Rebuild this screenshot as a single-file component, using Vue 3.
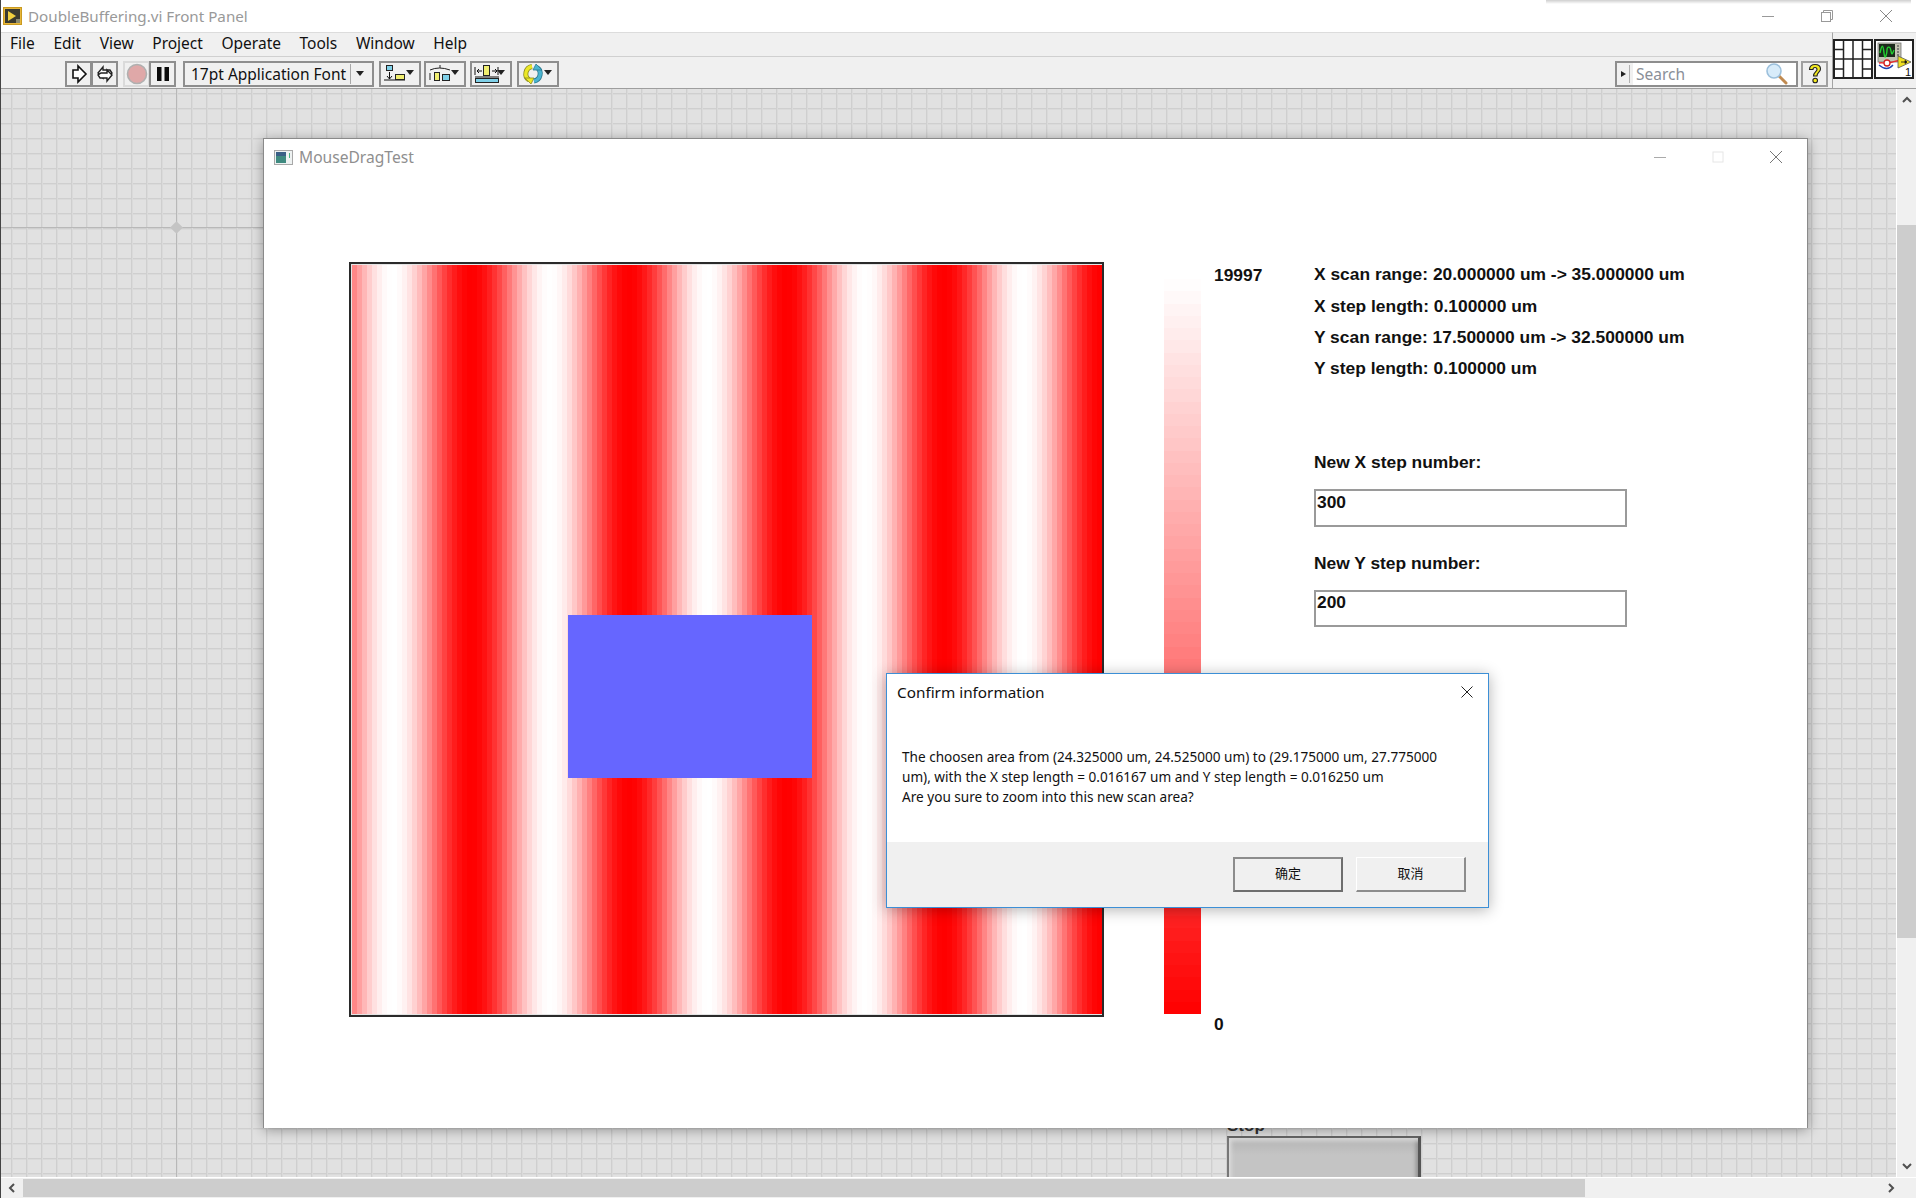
<script setup>
const menus = ["File", "Edit", "View", "Project", "Operate", "Tools", "Window", "Help"];

// 150 scan columns, 5px each on screen
const columns = Array.from({ length: 150 }, (_, i) => {
  const x = 354.5 + i * 5;
  const v = 0.5 + 0.5 * Math.cos((2 * Math.PI * (x - 392.5)) / 157.6);
  const g = Math.round(255 * v);
  return `rgb(255, ${g}, ${g})`;
});

const scale = Array.from({ length: 60 }, (_, i) => {
  const g = Math.round(255 * (1 - (i + 0.5) / 60));
  return `rgb(255, ${g}, ${g})`;
});

const infoRows = [
  "X scan range: 20.000000 um -> 35.000000 um",
  "X step length: 0.100000 um",
  "Y scan range: 17.500000 um -> 32.500000 um",
  "Y step length: 0.100000 um",
];
</script>

<template>
  <div class="app">
    <!-- LabVIEW window title -->
    <div class="titlebar">
      <svg class="vi-logo" width="19" height="18" viewBox="0 0 19 18">
        <rect x="0.5" y="0.5" width="18" height="17" fill="#e8b73a" stroke="#c99a20" />
        <rect x="2" y="2" width="15" height="14" fill="#3a3a30" />
        <path d="M5 4l8 5-8 5z" fill="#f0d040" />
        <rect x="13" y="12" width="4" height="4" fill="#8a8a70" />
      </svg>
      <span class="titlebar-text">DoubleBuffering.vi Front Panel</span>
      <div class="top-shadow"></div>
      <div class="win-buttons">
        <svg width="12" height="12" viewBox="0 0 12 12"><path d="M0 6.5h12" stroke="#999" fill="none" /></svg>
        <svg width="12" height="12" viewBox="0 0 12 12">
          <path d="M2.5 2.5v-2h9v9h-2" stroke="#999" fill="none" />
          <rect x="0.5" y="2.5" width="9" height="9" stroke="#999" fill="none" />
        </svg>
        <svg width="12" height="12" viewBox="0 0 12 12"><path d="M0 0l12 12M12 0L0 12" stroke="#888" fill="none" /></svg>
      </div>
    </div>

    <div class="chrome">
      <div class="chrome-main">
        <div class="menubar">
          <span v-for="m in menus" :key="m" class="menu-item">{{ m }}</span>
        </div>
        <div class="toolbar">
          <div class="tool-group first">
            <div class="tool-btn">
              <svg width="18" height="20" viewBox="0 0 18 20">
                <path d="M3 6h5V2l8 8-8 8v-4H3z" fill="#fff" stroke="#111" stroke-width="1.6" />
              </svg>
            </div>
            <div class="tool-btn joined">
              <svg width="20" height="20" viewBox="0 0 20 20">
                <path d="M3 9l5-6v3h7l2 3-3 2H8v3z" fill="#fff" stroke="#222" stroke-width="1.4" />
                <path d="M17 11l-5 6v-3H5l-2-3 3-2h6V6z" fill="#fff" stroke="#222" stroke-width="1.4" />
              </svg>
            </div>
          </div>
          <div class="tool-group abort-group">
            <div class="tool-btn flat">
              <svg width="22" height="22" viewBox="0 0 22 22">
                <circle cx="11" cy="11" r="9.5" fill="#dfa8a8" stroke="#b0b0b0" stroke-width="1.6" />
              </svg>
            </div>
            <div class="tool-btn joined">
              <svg width="14" height="16" viewBox="0 0 14 16">
                <rect x="1" y="1" width="4.5" height="14" fill="#0c0c0c" />
                <rect x="8.5" y="1" width="4.5" height="14" fill="#0c0c0c" />
              </svg>
            </div>
          </div>
          <div class="font-btn">
            <span class="font-name">17pt Application Font</span>
            <span class="font-sep"></span>
            <span class="caret"></span>
          </div>
          <div class="tool-btn drop align">
            <svg width="26" height="20" viewBox="0 0 26 20">
              <rect x="3.5" y="1.5" width="6" height="5" fill="#7fd0e8" stroke="#222" />
              <path d="M6.5 8v7M4 12l2.5 3L9 12" stroke="#111" fill="none" />
              <path d="M1 16h21" stroke="#111" />
              <rect x="12.5" y="10.5" width="9" height="5" fill="#f0ee70" stroke="#222" />
            </svg>
            <span class="caret"></span>
          </div>
          <div class="tool-btn drop dist">
            <svg width="26" height="20" viewBox="0 0 26 20">
              <path d="M2 6q9-4 20 0M12 1v3" stroke="#222" fill="none" />
              <rect x="6.5" y="8.5" width="5" height="8" fill="#f0ee70" stroke="#222" />
              <rect x="14.5" y="10.5" width="7" height="6" fill="#7fd0e8" stroke="#222" />
              <path d="M2 9v7" stroke="#222" />
            </svg>
            <span class="caret"></span>
          </div>
          <div class="tool-btn drop resize">
            <svg width="26" height="20" viewBox="0 0 26 20">
              <path d="M1 3v8M24 3v8M3 7h5M23 7h-5" stroke="#111" fill="none" />
              <path d="M5 5L3 7l2 2M21 5l2 2-2 2" stroke="#111" fill="none" />
              <rect x="9.5" y="1.5" width="6" height="10" fill="#f0ee70" stroke="#222" />
              <path d="M1 13h24" stroke="#111" />
              <rect x="1.5" y="14.5" width="23" height="4" fill="#7fd0e8" stroke="#222" />
            </svg>
            <span class="caret"></span>
          </div>
          <div class="tool-btn drop reorder">
            <svg width="26" height="22" viewBox="0 0 26 22">
              <path d="M11 3.500A7.500 7.500 0 0 0 8 17" stroke="#8a8a20" stroke-width="5" fill="none" />
              <path d="M11 3.500A7.500 7.500 0 0 0 8 17" stroke="#ece826" stroke-width="3.400" fill="none" />
              <path d="M4 15h9l-3 6z" fill="#ece826" stroke="#8a8a20" stroke-width="0.800" />
              <path d="M13 18A7.500 7.500 0 0 0 16 4.500" stroke="#2a7a90" stroke-width="5" fill="none" />
              <path d="M13 18A7.500 7.500 0 0 0 16 4.500" stroke="#4ab4d0" stroke-width="3.400" fill="none" />
              <path d="M21 7h-9l3-6z" fill="#4ab4d0" stroke="#2a7a90" stroke-width="0.800" />
            </svg>
            <span class="caret"></span>
          </div>
          <div class="search">
            <div class="search-side">
              <span class="search-arrow"></span>
            </div>
            <span class="search-text">Search</span>
            <svg class="search-icon" width="24" height="22" viewBox="0 0 24 22">
              <path d="M14 13l7 7" stroke="#c08a50" stroke-width="3" stroke-linecap="round" />
              <circle cx="9" cy="8" r="7" fill="#d8ecfa" stroke="#9cc0dc" stroke-width="1.6" />
            </svg>
          </div>
          <div class="help-btn">
            <svg width="16" height="22" viewBox="0 0 16 22">
              <path d="M2.5 6.5C2.5 3 5 1.5 8 1.5s5.500 1.500 5.500 4.500c0 3-3.500 3.500-3.500 7H6.500c0-4 3.500-4.500 3.500-6.500 0-1-.8-2-2-2s-2 1-2 2z" fill="#f4ea20" stroke="#222" stroke-width="1.100" />
              <circle cx="8.200" cy="17.500" r="2.300" fill="#f4ea20" stroke="#222" stroke-width="1.100" />
            </svg>
          </div>
        </div>
      </div>
      <div class="chrome-side">
        <svg width="40" height="40" viewBox="0 0 40 40">
          <rect x="1" y="1" width="38" height="38" fill="#fff" stroke="#222" stroke-width="2" />
          <path d="M10.500 1v38M20 1v38M29.500 1v38M1 20h38M1 10.500h9.500M1 30h9.500M29.500 10.500H39M29.500 30H39" stroke="#222" stroke-width="1.500" fill="none" />
        </svg>
        <svg width="40" height="40" viewBox="0 0 40 40">
          <rect x="1" y="1" width="38" height="38" fill="#fff" stroke="#222" stroke-width="2" />
          <rect x="4" y="4" width="23" height="19" fill="#c4c4b4" stroke="#777" stroke-width="0.800" />
          <rect x="5" y="5" width="16" height="13" fill="#1c2a1c" />
          <path d="M6 14c2-9 3-9 4 0s3 0 3-3 3-5 4 1 2 1 3-1" stroke="#22d030" stroke-width="1.400" fill="none" />
          <path d="M23 7h2M23 10h2M23 13h2M23 16h2" stroke="#666" stroke-width="1.500" />
          <path d="M5 24c4-1 8 1 10 0s8-2 12-3" stroke="#e83030" stroke-width="1.300" fill="none" />
          <circle cx="13" cy="24" r="3" fill="#fff" stroke="#d02020" stroke-width="1.300" />
          <path d="M5 26q8 7 14 0" stroke="#2040b0" stroke-width="1.300" fill="none" />
          <path d="M24 17l13 6-13 6z" fill="#f0e020" stroke="#555" stroke-width="0.800" />
          <path d="M27 23h4M31 21.500l2 1.500-2 1.500z" stroke="#111" fill="#111" stroke-width="0.800" />
          <text x="31" y="37" class="vi-num">1</text>
        </svg>
      </div>
    </div>

    <div class="workspace">
      <div class="canvas">
        <div class="origin-v"></div>
        <div class="origin-h"></div>
        <div class="origin-dot"></div>

        <div class="stop-ctl">
          <div class="stop-label">Stop</div>
          <div class="stop-btn"></div>
        </div>

        <!-- front panel child window -->
        <div class="panel">
          <div class="panel-title">
            <svg width="19" height="15" viewBox="0 0 19 15">
              <rect x="0.500" y="0.500" width="18" height="14" fill="#eef2f2" stroke="#a8a8a8" />
              <rect x="2" y="2" width="10" height="11" fill="#3f8a80" />
              <rect x="2" y="2" width="10" height="4" fill="#3a5f86" />
              <rect x="15" y="3" width="1" height="5" fill="#4ab080" />
            </svg>
            <span class="panel-name">MouseDragTest</span>
            <div class="panel-buttons">
              <svg width="12" height="12" viewBox="0 0 12 12"><path d="M0 6.500h12" stroke="#aaa" fill="none" /></svg>
              <svg width="12" height="12" viewBox="0 0 12 12"><rect x="1" y="1" width="10" height="10" stroke="#e6e6e6" fill="none" /></svg>
              <svg width="12" height="12" viewBox="0 0 12 12"><path d="M0 0l12 12M12 0L0 12" stroke="#777" fill="none" /></svg>
            </div>
          </div>
          <div class="panel-body">
            <div class="plot">
              <div class="plot-inner">
                <div v-for="(c, i) in columns" :key="i" class="col" :style="{ background: c }"></div>
                <div class="selection"></div>
              </div>
            </div>
            <div class="legend">
              <div class="legend-bar">
                <div v-for="(c, i) in scale" :key="i" class="legend-step" :style="{ background: c }"></div>
              </div>
              <div class="legend-labels">
                <span>19997</span>
                <span>0</span>
              </div>
            </div>
            <div class="info">
              <div v-for="r in infoRows" :key="r" class="info-row">{{ r }}</div>
              <div class="field-label first-field">New X step number:</div>
              <div class="field">300</div>
              <div class="field-label">New Y step number:</div>
              <div class="field">200</div>
            </div>
          </div>
        </div>
      </div>
      <div class="vscroll">
        <svg class="arrow" width="10" height="8" viewBox="0 0 10 8"><path d="M1 6l4-4 4 4" stroke="#505050" stroke-width="2" fill="none" /></svg>
        <div class="vthumb"></div>
        <div class="spacer"></div>
        <svg class="arrow" width="10" height="8" viewBox="0 0 10 8"><path d="M1 2l4 4 4-4" stroke="#505050" stroke-width="2" fill="none" /></svg>
      </div>
    </div>

    <div class="hscroll">
      <div class="h-arrow">
        <svg width="8" height="10" viewBox="0 0 8 10"><path d="M6 1L2 5l4 4" stroke="#505050" stroke-width="2" fill="none" /></svg>
      </div>
      <div class="hthumb"></div>
      <div class="spacer"></div>
      <div class="h-arrow right">
        <svg width="8" height="10" viewBox="0 0 8 10"><path d="M2 1l4 4-4 4" stroke="#505050" stroke-width="2" fill="none" /></svg>
      </div>
    </div>

    <!-- modal message box -->
    <div class="dialog">
      <div class="dialog-head">
        <span>Confirm information</span>
        <svg width="12" height="12" viewBox="0 0 12 12"><path d="M0.500 0.500l11 11M11.500 0.500l-11 11" stroke="#222" fill="none" /></svg>
      </div>
      <div class="dialog-msg">
        The choosen area from (24.325000 um, 24.525000 um) to (29.175000 um, 27.775000<br />
        um), with the X step length = 0.016167 um and Y step length = 0.016250 um<br />
        Are you sure to zoom into this new scan area?
      </div>
      <div class="dialog-foot">
        <div class="dlg-btn default">确定</div>
        <div class="dlg-btn">取消</div>
      </div>
    </div>
  </div>
</template>

<style scoped>
.app {
  position: relative;
  width: 1916px;
  height: 1198px;
  overflow: hidden;
  display: flex;
  flex-direction: column;
  background: #fff;
  font-family: "Noto Sans", "Liberation Sans", sans-serif;
  border-left: 1px solid #444;
  box-sizing: border-box;
}

.titlebar {
  position: relative;
  flex: none;
  height: 32px;
  display: flex;
  align-items: center;
  padding-left: 2px;
  background: #fff;
  box-sizing: border-box;
}

.titlebar-text {
  margin-left: 6px;
  font-size: 15.200px;
  color: #999;
}

.top-shadow {
  position: absolute;
  top: 0;
  left: 1545px;
  width: 365px;
  height: 4px;
  background: linear-gradient(#cfcfcf, #fff);
}

.win-buttons {
  margin-left: auto;
  width: 154px;
  display: flex;
  justify-content: space-between;
  box-sizing: border-box;
  padding-right: 24px;
  gap: 46px;
}

.chrome {
  flex: none;
  height: 57px;
  display: flex;
  background: #f0f0f0;
  border-bottom: 1px solid #9e9e9e;
  box-sizing: border-box;
}

.chrome-main {
  flex: 1;
  min-width: 0;
  display: flex;
  flex-direction: column;
}

.chrome-side {
  flex: none;
  width: 84px;
  box-sizing: border-box;
  border-left: 1px solid #a4a4a4;
  border-top: 1px solid #dcdcdc;
  display: flex;
  gap: 1px;
  padding: 6px 0 0 0;
}

.vi-num {
  font-family: "Liberation Sans", sans-serif;
  font-size: 11px;
  fill: #111;
}

.menubar {
  height: 25px;
  display: flex;
  align-items: center;
  padding: 0 0 3px 9px;
  gap: 18.600px;
  border-top: 1px solid #dcdcdc;
  border-bottom: 1px solid #d0d0d0;
  box-sizing: border-box;
  font-size: 15.500px;
  color: #111;
}

.toolbar {
  flex: 1;
  display: flex;
  align-items: center;
  padding: 2px 4px 0 64px;
}

.tool-group {
  display: flex;
}

.abort-group {
  margin-left: 5px;
}

.tool-btn {
  height: 26px;
  width: 27px;
  box-sizing: border-box;
  border: 2px solid #8e8e8e;
  display: flex;
  align-items: center;
  justify-content: center;
  flex: none;
}

.tool-btn.joined {
  margin-left: -1px;
}

.tool-btn.flat {
  border-color: #dadada;
}

.font-btn {
  margin-left: 7px;
  width: 191px;
  height: 26px;
  box-sizing: border-box;
  border: 2px solid #8e8e8e;
  display: flex;
  align-items: center;
  padding-left: 6px;
  font-size: 15.500px;
  color: #111;
}

.font-name {
  width: 159px;
  white-space: nowrap;
}

.font-sep {
  width: 1px;
  height: 20px;
  background: #a8a8a8;
  margin-right: 5px;
}

.caret {
  width: 0;
  height: 0;
  border-left: 4px solid transparent;
  border-right: 4px solid transparent;
  border-top: 5px solid #222;
}

.drop {
  width: 42px;
  gap: 0;
  justify-content: flex-start;
  padding-left: 2px;
}

.align {
  margin-left: 5px;
}

.dist {
  margin-left: 3px;
}

.resize {
  margin-left: 4px;
}

.reorder {
  margin-left: 5px;
}

.drop .caret {
  margin-left: -3px;
  margin-top: -3px;
}

.search {
  margin-left: auto;
  width: 183px;
  height: 26px;
  box-sizing: border-box;
  border: 2px solid #8e8e8e;
  background: #fff;
  display: flex;
  align-items: center;
}

.search-side {
  width: 16px;
  height: 100%;
  background: #f0f0f0;
  display: flex;
  align-items: center;
  padding-left: 4px;
  box-sizing: border-box;
  position: relative;
}

.search-side::after {
  content: "";
  position: absolute;
  right: 3px;
  top: 2px;
  bottom: 2px;
  width: 1px;
  background: #b0b0b0;
}

.search-arrow {
  width: 0;
  height: 0;
  border-top: 3px solid transparent;
  border-bottom: 3px solid transparent;
  border-left: 5px solid #222;
}

.search-text {
  margin-left: 3px;
  font-size: 15.500px;
  color: #8a8f98;
}

.search-icon {
  margin-left: auto;
  margin-right: 7px;
}

.help-btn {
  margin-left: 3px;
  width: 27px;
  height: 26px;
  box-sizing: border-box;
  border: 2px solid #a0a0a0;
  display: flex;
  align-items: center;
  justify-content: center;
}

.workspace {
  flex: 1;
  min-height: 0;
  display: flex;
}

.canvas {
  position: relative;
  flex: 1;
  min-width: 0;
  overflow: hidden;
  background-color: #e1e1e1;
  background-image:
    linear-gradient(to right, #cfcfcf 1px, #dadada 1px, #dadada 2px, transparent 2px),
    linear-gradient(to bottom, #cfcfcf 1px, #dadada 1px, #dadada 2px, transparent 2px);
  background-size: 15px 15px;
  background-position: 10px 4px;
}

.origin-v {
  position: absolute;
  left: 175px;
  top: 0;
  bottom: 0;
  width: 1px;
  background: #b8b8b8;
}

.origin-h {
  position: absolute;
  left: 0;
  top: 138px;
  width: 300px;
  height: 1px;
  background: #b8b8b8;
}

.origin-dot {
  position: absolute;
  left: 171px;
  top: 134px;
  width: 9px;
  height: 9px;
  background: #c4c4c4;
  transform: rotate(45deg);
}

.stop-ctl {
  position: absolute;
  left: 1226px;
  top: 1027px;
  width: 194px;
}

.stop-label {
  height: 20px;
  font-family: "Liberation Sans", sans-serif;
  font-size: 17px;
  font-weight: 700;
  line-height: 20px;
  color: #333;
}

.stop-btn {
  height: 70px;
  box-sizing: border-box;
  border-top: 2px solid #666;
  border-left: 2px solid #777;
  border-right: 3px solid #555;
  background: linear-gradient(#b4b4b4, #c4c4c4 25%, #c4c4c4 80%, #aeaeae);
  box-shadow: inset 5px 6px 4px -3px #dedede, inset -5px 0 4px -3px #8c8c8c;
}

.panel {
  position: absolute;
  left: 262px;
  top: 49px;
  width: 1545px;
  height: 990px;
  box-sizing: border-box;
  background: #fff;
  border: 1px solid #8a8a8a;
  border-bottom: none;
  box-shadow: 0 2px 12px rgba(0, 0, 0, 0.35);
  display: flex;
  flex-direction: column;
}

.panel-title {
  flex: none;
  height: 36px;
  display: flex;
  align-items: center;
  padding-left: 10px;
}

.panel-name {
  margin-left: 6px;
  font-size: 15.600px;
  color: #8f8f8f;
}

.panel-buttons {
  margin-left: auto;
  display: flex;
  gap: 46px;
  padding-right: 25px;
}

.panel-body {
  flex: 1;
  display: flex;
  align-items: flex-start;
  padding: 83px 0 0 85px;
  font-family: "Liberation Sans", sans-serif;
  font-size: 17.400px;
  font-weight: 700;
  color: #111;
}

.plot {
  flex: none;
  margin-top: 4px;
  width: 755px;
  height: 755px;
  box-sizing: border-box;
  border: 2px solid #2a2a2a;
  padding: 1px;
  background: #e4e4e4;
}

.plot-inner {
  position: relative;
  width: 100%;
  height: 100%;
  display: flex;
}

.col {
  flex: 1;
}

.selection {
  position: absolute;
  left: 216px;
  top: 350px;
  width: 244px;
  height: 163px;
  background: #6666ff;
}

.legend {
  flex: none;
  margin-left: 60px;
  margin-top: 8px;
  height: 767px;
  width: 150px;
  display: flex;
}

.legend-bar {
  flex: none;
  width: 37px;
  height: 735px;
  margin-top: 13px;
  display: flex;
  flex-direction: column;
}

.legend-step {
  flex: 1;
}

.legend-labels {
  margin-left: 13px;
  display: flex;
  flex-direction: column;
  justify-content: space-between;
  line-height: 18px;
}

.info {
  margin-top: 1.300px;
  flex: none;
}

.info-row {
  height: 31.300px;
  line-height: 31.300px;
  white-space: nowrap;
}

.field-label {
  margin-top: 20px;
  height: 33px;
  line-height: 33px;
}

.first-field {
  margin-top: 62px;
}

.field {
  margin-top: 10px;
  width: 313px;
  height: 37.300px;
  box-sizing: border-box;
  border: 2px solid #9a9a9a;
  padding: 1.700px 0 0 1px;
  line-height: 18px;
}

.vscroll {
  flex: none;
  width: 20px;
  box-sizing: border-box;
  border-left: 1px solid #fff;
  background: #f0f0f0;
  display: flex;
  flex-direction: column;
  align-items: center;
}

.arrow {
  flex: none;
  margin: 7px 0;
}

.vthumb {
  flex: none;
  margin-top: 114px;
  width: 100%;
  height: 713px;
  background: #cdcdcd;
}

.spacer {
  flex: 1;
}

.hscroll {
  flex: none;
  height: 21px;
  display: flex;
  align-items: center;
  background: #f0f0f0;
  border-top: 1px solid #fff;
  box-sizing: border-box;
}

.h-arrow {
  flex: none;
  width: 22px;
  display: flex;
  justify-content: center;
}

.h-arrow.right {
  width: 32px;
  justify-content: flex-start;
  padding-left: 3px;
  box-sizing: border-box;
}

.hthumb {
  flex: none;
  width: 1562px;
  height: 18px;
  background: #cdcdcd;
}

.dialog {
  position: absolute;
  left: 885px;
  top: 673px;
  width: 603px;
  height: 235px;
  box-sizing: border-box;
  background: #fff;
  border: 1px solid #3c8fd6;
  box-shadow: 0 2px 14px rgba(0, 0, 0, 0.3);
  display: flex;
  flex-direction: column;
  color: #111;
}

.dialog-head {
  flex: none;
  height: 36px;
  display: flex;
  align-items: center;
  justify-content: space-between;
  padding: 0 15px 0 10px;
  font-size: 15.300px;
}

.dialog-msg {
  flex: 1;
  padding: 37px 0 0 15px;
  font-size: 13.600px;
  line-height: 20px;
  white-space: nowrap;
}

.dialog-foot {
  flex: none;
  height: 65px;
  background: #f0f0f0;
  display: flex;
  justify-content: flex-end;
  gap: 13px;
  padding: 15px 22px 0 0;
  box-sizing: border-box;
}

.dlg-btn {
  width: 110px;
  height: 35px;
  box-sizing: border-box;
  border: 1px solid #d0d0d0;
  border-top-color: #fff;
  border-left-color: #fff;
  border-right: 2px solid #8c8c8c;
  border-bottom: 2px solid #8c8c8c;
  background: #f0f0f0;
  display: flex;
  align-items: center;
  justify-content: center;
  padding-bottom: 4px;
  font-family: "Noto Sans CJK SC", "Noto Sans", sans-serif;
  font-size: 13px;
}

.dlg-btn.default {
  border: 2px solid #6e6e6e;
  border-top-color: #8c8c8c;
  border-left-color: #8c8c8c;
}
</style>

<style>
html,
body {
  margin: 0;
  overflow: hidden;
}
</style>
